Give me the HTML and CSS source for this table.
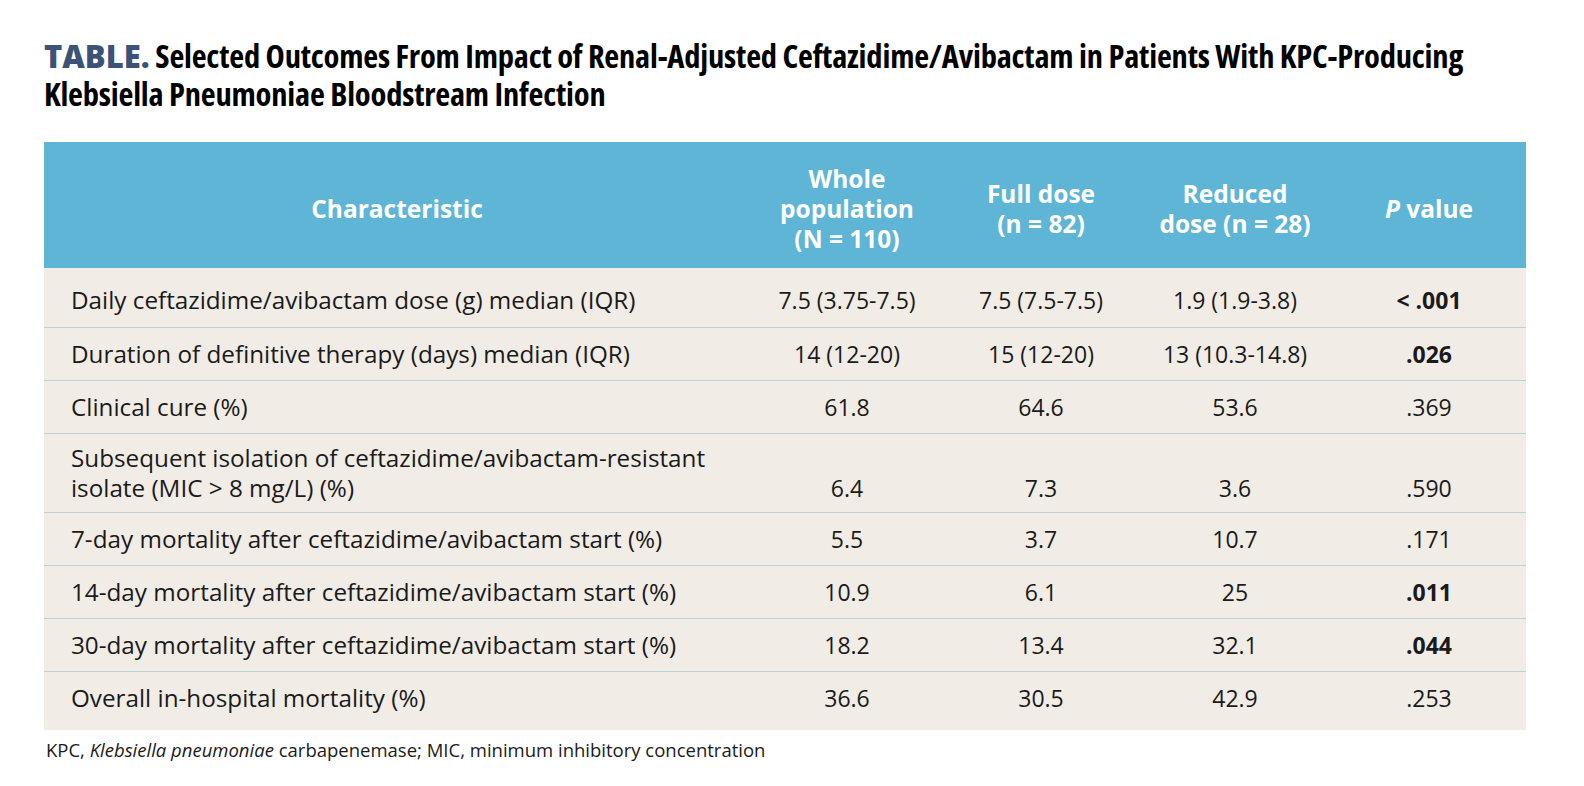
FILE: index.html
```html
<!DOCTYPE html>
<html lang="en">
<head>
<meta charset="utf-8">
<title>Table</title>
<link rel="stylesheet" href="styles.css">
</head>
<body>
<div class="page">
  <h1 class="title"><span class="label">TABLE.</span> Selected Outcomes From Impact of Renal-Adjusted Ceftazidime/Avibactam in Patients With KPC-Producing Klebsiella Pneumoniae Bloodstream Infection</h1>
  <table class="data">
    <colgroup>
      <col class="c0"><col class="cn"><col class="cn"><col class="cn"><col class="cn">
    </colgroup>
    <thead>
      <tr>
        <th>Characteristic</th>
        <th>Whole<br>population<br>(N = 110)</th>
        <th>Full dose<br>(n = 82)</th>
        <th>Reduced<br>dose (n = 28)</th>
        <th><i>P</i> value</th>
      </tr>
    </thead>
    <tbody>
      <tr class="first">
        <td>Daily ceftazidime/avibactam dose (g) median (IQR)</td>
        <td>7.5 (3.75-7.5)</td><td>7.5 (7.5-7.5)</td><td>1.9 (1.9-3.8)</td><td class="b">&lt; .001</td>
      </tr>
      <tr>
        <td>Duration of definitive therapy (days) median (IQR)</td>
        <td>14 (12-20)</td><td>15 (12-20)</td><td>13 (10.3-14.8)</td><td class="b">.026</td>
      </tr>
      <tr>
        <td>Clinical cure (%)</td>
        <td>61.8</td><td>64.6</td><td>53.6</td><td>.369</td>
      </tr>
      <tr class="multi">
        <td>Subsequent isolation of ceftazidime/avibactam-resistant<br>isolate (MIC &gt; 8 mg/L) (%)</td>
        <td>6.4</td><td>7.3</td><td>3.6</td><td>.590</td>
      </tr>
      <tr>
        <td>7-day mortality after ceftazidime/avibactam start (%)</td>
        <td>5.5</td><td>3.7</td><td>10.7</td><td>.171</td>
      </tr>
      <tr>
        <td>14-day mortality after ceftazidime/avibactam start (%)</td>
        <td>10.9</td><td>6.1</td><td>25</td><td class="b">.011</td>
      </tr>
      <tr>
        <td>30-day mortality after ceftazidime/avibactam start (%)</td>
        <td>18.2</td><td>13.4</td><td>32.1</td><td class="b">.044</td>
      </tr>
      <tr class="last">
        <td>Overall in-hospital mortality (%)</td>
        <td>36.6</td><td>30.5</td><td>42.9</td><td>.253</td>
      </tr>
    </tbody>
  </table>
  <p class="note">KPC, <i>Klebsiella pneumoniae</i> carbapenemase; MIC, minimum inhibitory concentration</p>
</div>
</body>
</html>
```
FILE: styles.css
```css
html, body {
  margin: 0;
  padding: 0;
  background: #ffffff;
}
body {
  font-family: "Open Sans", "DejaVu Sans", sans-serif;
  color: #1a1a1a;
}
.page {
  padding: 37px 58px 0 44px;
}
.title {
  margin: 0 0 29px 0;
  font-family: "Open Sans", sans-serif;
  font-stretch: 75%;
  font-weight: 700;
  font-size: 32.5px;
  line-height: 38px;
  color: #000;
  letter-spacing: -0.2px;
}
.title .label {
  font-stretch: 100%;
  font-weight: 800;
  font-size: 31px;
  color: #3c5377;
  letter-spacing: 0;
}
.data {
  width: 1482px;
  border-collapse: collapse;
  background: #f1ece6;
}
.data col.c0 { width: 706px; }
.data col.cn { width: 194px; }
.data thead th {
  background: #5eb5d6;
  color: #ffffff;
  font-weight: 700;
  font-size: 24.5px;
  line-height: 30px;
  height: 126px;
  padding: 8px 0 0 0;
  box-sizing: border-box;
  text-align: center;
  vertical-align: middle;
}
.data thead th i { font-style: italic; }
.data tbody td {
  font-size: 23px;
  line-height: 30px;
  height: 53px;
  padding: 0;
  box-sizing: border-box;
  text-align: center;
  vertical-align: middle;
  border-top: 1.5px solid #b6d4dd;
}
.data tbody tr.first td { border-top: none; height: 59px; padding-top: 5px; }
.data tbody tr.last td { height: 59px; padding-bottom: 6px; }
.data tbody td:first-child {
  text-align: left;
  padding-left: 27px;
  font-size: 24.25px;
}
.data tbody tr.multi td {
  height: 78px;
  padding-top: 9px;
  padding-bottom: 9px;
  vertical-align: bottom;
}
.data tbody tr.multi td:first-child { vertical-align: middle; }
.data td.b { font-weight: 700; }
.note {
  margin: 7px 0 0 2px;
  font-size: 18.5px;
  line-height: 26px;
  color: #1a1a1a;
}
```
